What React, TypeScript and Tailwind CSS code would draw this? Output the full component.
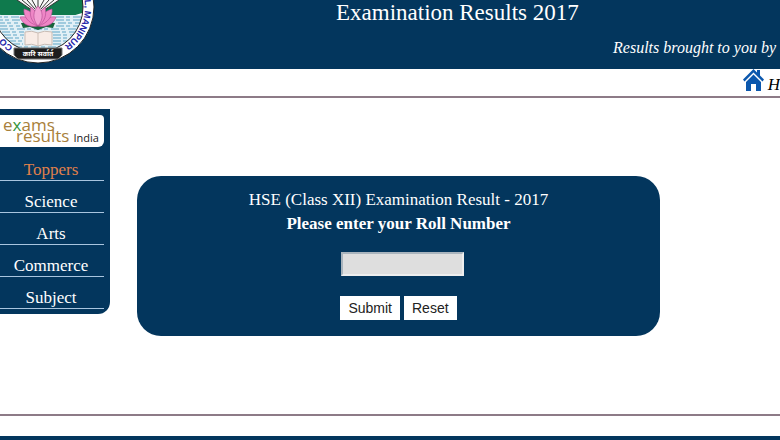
import React, { useState } from "react";

const menuItems = [
  { name: "Toppers", href: "#toppers", active: true },
  { name: "Science", href: "#science", active: false },
  { name: "Arts", href: "#arts", active: false },
  { name: "Commerce", href: "#commerce", active: false },
  { name: "Subject", href: "#subject", active: false },
];

function CouncilLogo() {
  return (
    <svg width="96" height="66" viewBox="0 0 96 66" role="img" aria-label="Council logo">
      <defs>
        <clipPath id="seal">
          <circle cx="38" cy="7" r="45" />
        </clipPath>
        <path id="ring-left" d="M13 46.500 A 47 47 0 0 1 -9 7" />
        <path id="ring-right" d="M84.500 0 A 47 47 0 0 1 46 53" />
      </defs>
      <circle cx="38" cy="7" r="56" fill="#fff" stroke="#222" strokeWidth="1" />
      <g clipPath="url(#seal)">
        <rect x="-10" y="-10" width="100" height="70" fill="#fff" />
        <path d="M-8 -5H10L20 1L27 7L38 10L49 7L56 1L66 -5H86V12L72 16H4L-8 12Z" fill="#0f7a4d" />
        <path d="M10 -5H66L56 2L44 10H32L20 2Z" fill="#f8f8f8" />
        <path
          d="M17 0L32 10M22 0L34 10M27 0L35 9M32 0L37 9M38 0V9M44 0L39 9M49 0L41 9M54 0L42 10M59 0L44 10"
          stroke="#333"
          strokeWidth="1"
        />
        <rect x="-8" y="15" width="94" height="40" fill="#e2f0f6" />
        <path
          d="M-6 17H20M56 17H83M-5 20H20M56 20H82M-3 23H18M58 23H80M-1 26H20M56 26H78M0 29H78M2 32H24M52 32H76M3 35H24M53 35H74M5 38H23M53 38H72M8 41H23M53 41H68M12 44H23M53 44H65M14 47H62"
          stroke="#5fa5c6"
          strokeWidth="1"
          strokeDasharray="8 2 4 3"
        />
      </g>
      <circle cx="38" cy="7" r="45" fill="none" stroke="#222" strokeWidth="1" />
      <path d="M21 23Q38 20 55 23L53 28L46 27L38 30L30 27L23 28Z" fill="#17633b" />
      <g fill="#ee86c6" stroke="#b04a90" strokeWidth="0.600">
        <path d="M38 26C30 28 22 24 20 17C28 16 34 19 38 26ZM38 26C46 28 54 24 56 17C48 16 42 19 38 26Z" />
        <path d="M38 26C28 23 23 16 24 9C32 11 37 17 38 26ZM38 26C48 23 53 16 52 9C44 11 39 17 38 26Z" />
        <path d="M38 26C31 22 29 14 31 7C37 11 39 18 38 26ZM38 26C45 22 47 14 45 7C39 11 37 18 38 26Z" />
        <path d="M38 26C32 19 33 11 38 6C43 11 44 19 38 26Z" fill="#f3a0d3" />
      </g>
      <path d="M25 32Q32 30 38 33Q44 30 52 32V45Q44 43 38 46Q32 43 25 45Z" fill="#f8ece6" stroke="#c9bcb4" strokeWidth="1" />
      <path d="M38 33V46" stroke="#cdbfb6" />
      <path d="M14 48H62V55L58 59H18L14 55Z" fill="#1d1d1d" stroke="#777" />
      <text x="38" y="56" fill="#fff" fontSize="7" fontWeight="700" textAnchor="middle" fontFamily="'Noto Sans', sans-serif">
        कारि सर्वार्त
      </text>
      <g fill="#2424a8" fontSize="9" fontWeight="700" fontFamily="'Liberation Sans', sans-serif">
        <text>
          <textPath href="#ring-left">CO</textPath>
        </text>
        <text>
          <textPath href="#ring-right">L, MANIPUR</textPath>
        </text>
      </g>
    </svg>
  );
}

function HomeIcon() {
  return (
    <svg width="21" height="23" viewBox="0 0 21 23" fill="#0b57ad" aria-hidden="true">
      <path d="M10.500 0L14 3.500V1H17V6.500L21 10.500L19.500 12.500L10.500 3.500L1.500 12.500L0 10.500Z" />
      <path d="M10.500 5.500L18 13V22H13V15H8V22H3V13Z" />
    </svg>
  );
}

export default function App() {
  const [rollNumber, setRollNumber] = useState("");

  return (
    <div className="flex min-h-screen w-full flex-col overflow-hidden bg-white font-['Liberation_Serif',serif]">
      {/* Header */}
      <header className="flex h-[69px] justify-between overflow-hidden bg-[#03365d] text-white">
        <CouncilLogo />
        <div className="flex w-[444px] shrink-0 flex-col pr-1">
          <h1 className="whitespace-nowrap text-[23px] leading-[26px]">Examination Results 2017</h1>
          <p className="mt-3 self-end whitespace-nowrap text-[16px] italic leading-[20px]">
            Results brought to you by
          </p>
        </div>
      </header>

      <nav className="flex h-[29px] justify-end border-b-2 border-[#8d7b87]">
        <a href="#home" className="flex items-start gap-1 text-[17px] italic leading-[32px] text-black">
          <HomeIcon />
          H
        </a>
      </nav>

      <main className="flex flex-1 items-start gap-[27px] pt-[11px]">
        {/* Side menu */}
        <aside className="w-[110px] shrink-0 rounded-br-xl bg-[#03365d] pb-[5px] pr-[6px] pt-[6px]">
          <a
            href="#exams"
            className="block h-[32px] rounded-br-md rounded-tr-sm bg-white pl-[3px] pt-1 font-['Open_Sans',sans-serif] text-[17px] leading-[11px] text-[#a8803a]"
          >
            <span className="block">
              e<span className="text-[#35943c]">x</span>ams
            </span>
            <span className="flex items-baseline gap-1 whitespace-nowrap pl-[13px]">
              results
              <span className="text-[11px] text-[#222]">India</span>
            </span>
          </a>
          <ul className="pt-[2px]">
            {menuItems.map((item) => (
              <li key={item.name}>
                <a
                  href={item.href}
                  className={`block border-b border-[#a9c5df] pr-[2px] pt-[11px] text-center text-[17px] leading-[20px] ${
                    item.active ? "text-[#e0804b]" : "text-white"
                  }`}
                >
                  {item.name}
                </a>
              </li>
            ))}
          </ul>
        </aside>

        {/* Result form */}
        <form
          className="mr-[120px] mt-[67px] flex flex-1 flex-col items-center rounded-3xl bg-[#03365d] pb-4 pt-3 text-white"
          onSubmit={(e) => e.preventDefault()}
          onReset={() => setRollNumber("")}
        >
          <h2 className="text-[17px] leading-[24px]">HSE (Class XII) Examination Result - 2017</h2>
          <label htmlFor="roll" className="text-[17px] font-bold leading-[24px]">
            Please enter your Roll Number
          </label>
          <div className="mt-4 flex pl-2">
            <input
              id="roll"
              type="text"
              value={rollNumber}
              onChange={(e) => setRollNumber(e.target.value)}
              className="h-[24px] w-[123px] border-2 border-b-[#eee] border-l-[#a9b4bd] border-r-[#eee] border-t-[#a9b4bd] bg-[#dedede] px-1 text-sm text-black"
            />
          </div>
          <div className="mt-5 flex gap-1 font-['Liberation_Sans',sans-serif] text-[14px] text-[#222]">
            <button type="submit" className="h-[24px] bg-white px-2">
              Submit
            </button>
            <button type="reset" className="h-[24px] bg-white px-2">
              Reset
            </button>
          </div>
        </form>
      </main>

      <footer className="h-[26px] border-b-4 border-t-2 border-b-[#03365d] border-t-[#8d7b87]" />
    </div>
  );
}
